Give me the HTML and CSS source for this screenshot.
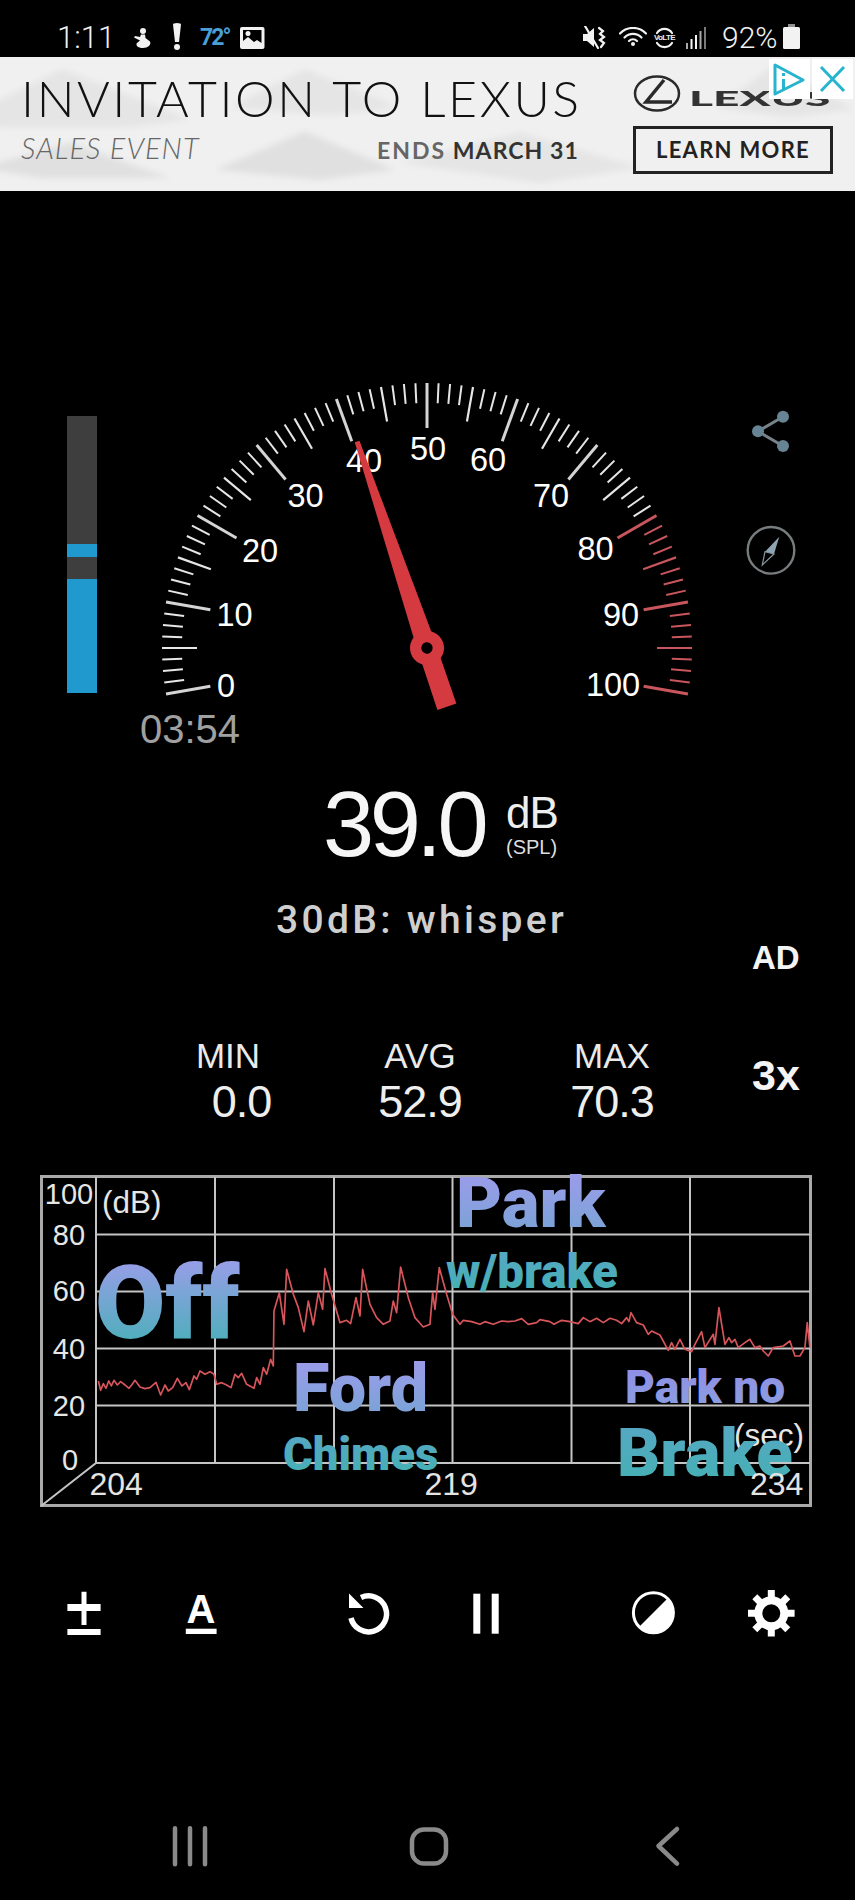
FILE: index.html
```html
<!DOCTYPE html>
<html lang="en">
<head>
<meta charset="utf-8">
<title>Sound Meter</title>
<link rel="stylesheet" href="styles.css">
</head>
<body>
<div class="phone">
  <header class="status">
    <div class="status-group">
      <span class="time">1:11</span>
      <svg class="si si-figure" viewBox="0 0 21 20"><circle cx="12" cy="3" r="3"/><path d="M10 6.500h4l.5 3.500 4.500 3.500c1.500 3-2 6.500-7 6.500-4 0-7-1.500-6.500-4.500l3.500-3-6-3 1-1.500 5 1z"/></svg>
      <svg class="si si-alert" viewBox="0 0 12 27"><path d="M2 1.500a4 1.500 0 0 1 8 0L8 19H4z"/><circle cx="6" cy="24" r="3"/></svg>
      <span class="temp">72°</span>
      <svg class="si si-image" viewBox="0 0 24.500 22"><path fill-rule="evenodd" d="M2 0h20.500a2 2 0 0 1 2 2v18a2 2 0 0 1-2 2H2a2 2 0 0 1-2-2V2a2 2 0 0 1 2-2zM3 3v11l5-4 6 5 3-2 4.500 3V3z"/><circle cx="8" cy="6.500" r="2.500"/></svg>
    </div>
    <div class="status-group">
      <svg class="si si-mute" viewBox="0 0 25 23"><path d="M0 8h4l7-6v19l-7-6H0z"/><path class="si-line" d="M16 2l4 3-3 3 4 3-4 3 4 3-3 4"/><path class="si-line" d="M2 0l13 22"/></svg>
      <svg class="si si-wifi" viewBox="0 0 28 19"><g class="si-line"><path d="M1 6.500a18 18 0 0 1 26 0"/><path d="M5.500 10.500a12 12 0 0 1 17 0"/><path d="M10 14a6 6 0 0 1 8 0"/></g><circle cx="14" cy="17" r="2"/></svg>
      <span class="volte">
        <svg class="si volte-arcs" viewBox="0 0 23 24"><path class="si-line" d="M4 7a9 9 0 0 1 15 0M19 17a9 9 0 0 1-15 0"/></svg>
        <span class="volte-text">VoLTE</span>
      </span>
      <svg class="si si-signal" viewBox="0 0 20 22"><rect x="0" y="16" width="2" height="6" opacity=".7"/><rect x="4.500" y="12" width="2" height="10"/><rect x="9" y="8" width="2" height="14"/><rect x="13.500" y="4" width="2" height="18" opacity=".7"/><rect x="18" y="0" width="2" height="22" opacity=".5"/></svg>
      <span class="battery-text">92%</span>
      <svg class="si si-battery" viewBox="0 0 17 25"><path d="M5 0h7v3H5z" opacity=".6"/><rect y="3" width="17" height="22" rx="1.500"/></svg>
    </div>
  </header>

  <section class="ad">
    <svg class="ad-bg" viewBox="0 0 855 133" preserveAspectRatio="none" aria-hidden="true">
      <defs><filter id="soft"><feGaussianBlur stdDeviation="3"/></filter></defs>
      <g filter="url(#soft)">
        <path class="ad-shade" d="M-40 62L62 12 190 62 130 70H0z"/>
        <path class="ad-shade" d="M230 50L305 12 400 50 330 58z"/>
        <path class="ad-shade" d="M715 50L775 8 855 52 790 60z"/>
        <path class="ad-shade-dark" d="M-20 110L70 85 170 120H40z"/>
        <path class="ad-shade-dark" d="M215 112L305 74 395 112 320 122z"/>
        <path class="ad-shade" d="M400 105L520 75 640 110 540 125z"/>
      </g>
    </svg>
    <div class="ad-left">
      <div class="ad-title">INVITATION TO LEXUS</div>
      <div class="ad-sub">
        <span class="ad-sales">SALES EVENT</span>
        <span class="ad-ends"><span class="ad-ends-soft">ENDS</span> MARCH 31</span>
      </div>
    </div>
    <div class="ad-right">
      <div class="ad-logo">
        <svg class="ad-emblem" viewBox="0 0 48 37"><ellipse cx="24" cy="18.500" rx="22" ry="17"/><path class="ad-emblem-l" d="M31 5L13 27h26"/></svg>
        <span class="ad-brand">LEXUS</span>
      </div>
      <div class="ad-cta">LEARN MORE</div>
    </div>
    <div class="ad-choices">
      <span class="ad-choice">
        <svg viewBox="0 0 41 40"><path d="M6 6l28 15L6 35z"/><path d="M14.500 14v3M14.500 20v11"/></svg>
      </span>
      <span class="ad-choice">
        <svg viewBox="0 0 41 40"><path d="M9 8l23 24M32 8L9 32"/></svg>
      </span>
    </div>
  </section>

  <section class="gauge-row">
    <div class="level">
      <div class="level-seg level-off level-a"></div>
      <div class="level-seg level-on level-b"></div>
      <div class="level-seg level-off level-c"></div>
      <div class="level-seg level-on level-d"></div>
    </div>
    <svg class="gauge" viewBox="130 370 590 380">
      <g id="ticks" class="ticks"></g>
      <g class="gauge-nums">
        <text x="226" y="696.500">0</text>
        <text x="234.500" y="626">10</text>
        <text x="260" y="562">20</text>
        <text x="305.500" y="506.500">30</text>
        <text x="364" y="471.500">40</text>
        <text x="428" y="459.500">50</text>
        <text x="488" y="471">60</text>
        <text x="551" y="506.500">70</text>
        <text x="595.500" y="560">80</text>
        <text x="621" y="626">90</text>
        <text x="613" y="696">100</text>
      </g>
      <text class="gauge-timer" x="140" y="742.500">03:54</text>
      <g class="needle" transform="translate(427 648) rotate(-18.700)">
        <path d="M-2.500 -218H2.500L9.500 -10 10 62H-10L-9.500 -10Z"/>
        <circle r="17"/>
        <circle class="needle-hole" r="5.700"/>
      </g>
    </svg>
    <div class="gauge-side">
      <svg class="share" viewBox="0 0 50 46"><path d="M37 8.700L12 23.300 37 38"/><circle cx="37" cy="8.700" r="6"/><circle cx="12" cy="23.300" r="6"/><circle cx="37" cy="38" r="6"/></svg>
      <svg class="compass" viewBox="0 0 50 50"><circle class="compass-ring" cx="25" cy="25.300" r="23.300"/><path class="compass-up" d="M33.300 11.700L19 26.700 28 29z"/><path class="compass-down" d="M19 26.700L16.300 40 28 29z"/></svg>
    </div>
  </section>

  <section class="reading">
    <span class="reading-value">39.0</span>
    <div class="reading-unit">
      <span class="unit-db">dB</span>
      <span class="unit-spl">(SPL)</span>
    </div>
  </section>
  <div class="reference">30dB: whisper</div>
  <div class="ad-tag">AD</div>

  <section class="stats">
    <div class="stat stat-min"><span class="stat-label">MIN</span><span class="stat-value">0.0</span></div>
    <div class="stat"><span class="stat-label">AVG</span><span class="stat-value">52.9</span></div>
    <div class="stat"><span class="stat-label">MAX</span><span class="stat-value">70.3</span></div>
    <span class="speed">3x</span>
  </section>

  <svg class="chart" viewBox="40 1170 772 340">
    <defs>
      <linearGradient id="gradOff" x1="0" y1="0" x2="0" y2="1"><stop offset=".1" stop-color="#9d9deb"/><stop offset=".9" stop-color="#46b0b6"/></linearGradient>
      <linearGradient id="gradFord" x1="0" y1="0" x2="0" y2="1"><stop offset=".15" stop-color="#9c9ceb"/><stop offset=".85" stop-color="#7aa3d6"/></linearGradient>
      <linearGradient id="gradTeal" x1="0" y1="0" x2="0" y2="1"><stop offset=".2" stop-color="#55a8c2"/><stop offset=".85" stop-color="#45b0b4"/></linearGradient>
      <linearGradient id="gradLav" x1="0" y1="0" x2="0" y2="1"><stop offset=".2" stop-color="#9090e6"/><stop offset=".9" stop-color="#8a9fe0"/></linearGradient>
    </defs>
    <g class="chart-grid">
      <rect class="chart-frame" x="41.500" y="1175.500" width="769" height="329"/>
      <path d="M96 1176V1462L41 1505M96 1462H810M96 1233.500H810M96 1290.500H810M96 1347.500H810M96 1404.500H810M215 1176V1462M334 1176V1462M452.500 1176V1462M571.500 1176V1462M690 1176V1462"/>
    </g>
    <polyline class="chart-line" transform="translate(30 1160) scale(.3333)" points="205,660 212,688 220,668 228,682 236,660 244,675 252,658 262,672 272,662 285,672 297,682 305,672 315,658 330,678 345,683 360,680 378,664 392,702 405,672 415,690 428,680 442,652 456,675 468,665 478,686 492,645 500,655 510,630 525,640 540,632 552,640 560,670 575,665 590,672 603,680 615,640 625,650 635,637 650,670 672,682 680,650 690,670 700,620 710,640 722,595 730,615 732,450 748,395 762,490 770,325 790,400 805,440 822,512 835,420 850,492 865,395 878,445 885,323 905,400 930,485 950,478 962,488 978,410 990,465 998,325 1020,430 1040,470 1060,490 1080,480 1090,420 1100,455 1112,318 1135,410 1155,470 1180,498 1200,490 1208,395 1215,445 1228,320 1250,400 1268,460 1290,490 1300,478 1325,482 1350,490 1365,482 1390,490 1415,480 1435,482 1455,480 1475,473 1495,490 1520,485 1530,476 1560,482 1572,490 1595,478 1620,482 1645,488 1660,470 1680,482 1700,472 1720,485 1740,472 1760,478 1775,488 1790,470 1797,482 1803,455 1820,485 1840,492 1855,520 1865,510 1890,522 1915,568 1925,545 1935,565 1950,535 1965,565 1985,572 1995,550 2015,512 2025,560 2050,520 2055,550 2067,440 2085,550 2097,530 2105,545 2115,535 2125,560 2145,545 2160,535 2175,560 2190,555 2200,570 2215,585 2230,560 2260,555 2280,540 2295,585 2310,585 2325,560 2332,485 2340,560"/>
    <g class="chart-y">
      <text x="69" y="1203">100</text>
      <text x="69" y="1244">80</text>
      <text x="69" y="1300">60</text>
      <text x="69" y="1358">40</text>
      <text x="69" y="1415">20</text>
      <text x="70" y="1469">0</text>
    </g>
    <text class="chart-unit" x="102" y="1212">(dB)</text>
    <g class="overlay">
      <text class="ov-off" x="95" y="1337" fill="url(#gradOff)">Off</text>
      <text class="ov-park" x="456" y="1226" fill="url(#gradFord)">Park</text>
      <text class="ov-wbrake" x="446" y="1287" fill="url(#gradTeal)">w/brake</text>
      <text class="ov-ford" x="293" y="1410" fill="url(#gradFord)">Ford</text>
      <text class="ov-chimes" x="283" y="1469" fill="url(#gradTeal)">Chimes</text>
      <text class="ov-parkno" x="625" y="1402" fill="url(#gradLav)">Park no</text>
    </g>
    <text class="chart-unit" x="734" y="1445">(sec)</text>
    <text class="ov-brake" x="617" y="1475" fill="url(#gradTeal)">Brake</text>
    <g class="chart-x">
      <text x="89.500" y="1494">204</text>
      <text x="424.500" y="1494">219</text>
      <text x="750" y="1494">234</text>
    </g>
  </svg>

  <nav class="toolbar">
    <svg class="tool" viewBox="0 0 48 48"><path d="M21.500 2.700h5V15h14.100v7H26.500v14h-5V22H7.400v-7h14.100zM7.400 40h33.200v6H7.400z"/></svg>
    <svg class="tool" viewBox="0 0 48 48"><text class="tool-letter" x="24" y="33.700">A</text><rect x="8.800" y="39.700" width="30.800" height="5.300"/></svg>
    <svg class="tool" viewBox="0 0 48 48"><path class="tool-stroke" d="M6 29A18 18 0 1 0 16 8.500"/><path d="M4 4.500V19H18.500z"/></svg>
    <svg class="tool" viewBox="0 0 48 48"><rect x="11.300" y="4.700" width="7" height="40"/><rect x="29.700" y="4.700" width="7" height="40"/></svg>
    <svg class="tool" viewBox="0 0 48 48"><circle class="tool-thin" cx="24.400" cy="23.700" r="20"/><path d="M10 38L38.500 9.500A20 20 0 0 1 10 38z"/></svg>
    <svg class="tool" viewBox="0 0 48 48"><circle class="tool-ring" cx="24.300" cy="24.300" r="13"/><path class="tool-teeth" d="M24.300 1v9M24.300 38.600v9M1 24.300h9M38.600 24.300h9M7.800 7.800l6.400 6.400M34.400 34.400l6.400 6.400M40.800 7.800l-6.400 6.400M14.200 34.400l-6.400 6.400"/></svg>
  </nav>

  <nav class="navbar">
    <svg class="nav-icon" viewBox="0 0 48 48"><path d="M9 6.300v36M24 6.300v36M39 6.300v36"/></svg>
    <svg class="nav-icon" viewBox="0 0 48 48"><rect x="7" y="7.500" width="34" height="34" rx="12"/></svg>
    <svg class="nav-icon" viewBox="0 0 48 48"><path d="M33 7L14.500 24 33 41.700"/></svg>
  </nav>
</div>
<script src="gauge.js"></script>
</body>
</html>
```

FILE: styles.css
```css
* { box-sizing: border-box; }
html, body { margin: 0; padding: 0; background: #000; }
body { font-family: "Liberation Sans", Arial, sans-serif; color: #fff; }
.phone { width: 855px; height: 1900px; overflow: hidden; background: #000; }

/* status bar */
.status { height: 57px; padding: 18px 55px 0 57px; display: flex; justify-content: space-between; align-items: center; }
.status-group { display: flex; align-items: center; }
.si { display: block; fill: #f2f2f2; flex: none; }
.si-line, .si-line path { fill: none; stroke: #f2f2f2; stroke-width: 2.200; stroke-linecap: round; }
.time { font: 300 31px/30px Roboto, sans-serif; color: #f2f2f2; width: 55px; white-space: nowrap; }
.si-figure { width: 21px; height: 20px; margin-left: 19px; }
.si-alert { width: 12px; height: 27px; margin-left: 19px; margin-top: -2px; }
.temp { font: 700 23px/24px "Liberation Sans Narrow", Roboto, sans-serif; color: #4aa0d6; width: 29px; margin-left: 17px; letter-spacing: -2px; white-space: nowrap; }
.si-image { width: 24.500px; height: 22px; margin-left: 11px; }
.si-mute { width: 25px; height: 23px; }
.si-wifi { width: 28px; height: 19px; margin-left: 11px; margin-top: -3px; }
.volte { position: relative; width: 23px; height: 24px; margin-left: 6px; display: block; }
.volte-arcs { width: 23px; height: 24px; }
.volte-text { position: absolute; left: 0; right: 0; top: 7px; text-align: center; font: 700 8px/10px "Liberation Sans", sans-serif; letter-spacing: -.6px; color: #eee; }
.si-signal { width: 20px; height: 22px; margin-left: 10px; }
.battery-text { font: 300 30px/30px Roboto, sans-serif; color: #f2f2f2; width: 55px; margin-left: 16px; white-space: nowrap; }
.si-battery { width: 17px; height: 25px; margin-left: 6px; margin-top: -2px; }

/* ad banner */
.ad { position: relative; height: 134px; display: flex; padding: 0 0 0 21px; background: #f0f0f0; color: #222; overflow: hidden; }
.ad-bg { position: absolute; inset: 0; width: 100%; height: 100%; }
.ad-shade { fill: #e5e5e5; }
.ad-shade-dark { fill: #e0e0e0; }
.ad-left { position: relative; width: 558px; padding-top: 16px; }
.ad-title { font: 300 50px/50px Lato, sans-serif; letter-spacing: 2.600px; color: #111; white-space: nowrap; }
.ad-sub { display: flex; justify-content: space-between; align-items: baseline; margin-top: 10px; }
.ad-sales { font: italic 300 29px/29px Lato, sans-serif; letter-spacing: 1px; color: #666; white-space: nowrap; }
.ad-ends { font: 700 23px/29px Lato, sans-serif; letter-spacing: 1.100px; color: #333; white-space: nowrap; }
.ad-ends-soft { color: #666; letter-spacing: 2px; }
.ad-right { position: relative; width: 200px; margin-left: 54px; padding-top: 18px; }
.ad-logo { display: flex; align-items: center; height: 37px; }
.ad-emblem { width: 48px; height: 37px; fill: none; stroke: #2a2a2a; stroke-width: 2.500; flex: none; }
.ad-emblem-l { stroke-width: 3.500; }
.ad-brand { font: 900 20px/20px Lato, sans-serif; color: #333; margin-left: 8px; margin-top: 8px; white-space: nowrap; transform: scaleX(2.300); transform-origin: left center; }
.ad-cta { margin-top: 14px; height: 48px; border: 3px solid #222; font: 700 22px/42px Lato, sans-serif; letter-spacing: 1.300px; text-align: center; color: #222; white-space: nowrap; }
.ad-choices { position: absolute; top: 2px; right: 2px; display: flex; gap: 2px; }
.ad-choice { display: block; width: 41px; height: 40px; background: #fff; }
.ad-choice svg { display: block; width: 41px; height: 40px; fill: none; stroke: #27b4cf; stroke-width: 3; stroke-linejoin: round; }

/* gauge */
.gauge-row { display: flex; margin-top: 179px; height: 380px; }
.level { width: 30px; height: 277px; margin: 46px 0 0 67px; display: flex; flex-direction: column; flex: none; }
.level-off { background: #3e3e3e; }
.level-on { background: #2099cf; }
.level-a { height: 128px; }
.level-b { height: 13px; }
.level-c { height: 22px; }
.level-d { height: 114px; }
.gauge { width: 590px; height: 380px; margin-left: 33px; flex: none; display: block; overflow: visible; }
.tick { stroke: #e6e6e6; stroke-width: 2; }
.tick-major { stroke: #d4d4d4; stroke-width: 3; }
.tick-mid { stroke-width: 2.200; }
.tick-red { stroke: #c9565d; }
.gauge-nums text { font-size: 32.500px; fill: #fff; text-anchor: middle; }
.gauge-timer { font-size: 40px; fill: #a0a0a0; }
.needle { fill: #d63a41; }
.needle-hole { fill: #000; }
.gauge-side { margin: 38px 0 0 26px; display: flex; flex-direction: column; gap: 71px; }
.share { display: block; width: 50px; height: 46px; }
.share path { fill: none; stroke: #77838b; stroke-width: 3; }
.share circle { fill: #668494; }
.compass { display: block; width: 50px; height: 50px; }
.compass-ring { fill: none; stroke: #777c7f; stroke-width: 2.400; }
.compass-up { fill: #8da4b2; }
.compass-down { fill: #000; stroke: #8a98a0; stroke-width: 1.200; }

/* reading */
.reading { display: flex; margin-top: 28px; height: 92px; padding-left: 323px; }
.reading-value { font-size: 92px; line-height: 92px; letter-spacing: -4.500px; width: 183px; white-space: nowrap; color: #f6f6f6; }
.reading-unit { display: flex; flex-direction: column; margin-top: 14px; }
.unit-db { font-size: 44px; line-height: 42px; letter-spacing: -1px; color: #eee; }
.unit-spl { font-size: 20px; line-height: 20px; margin-top: 3px; color: #ddd; }
.reference { margin-top: 32px; padding-left: 276px; font: 500 39px/37px Roboto, sans-serif; letter-spacing: 3.300px; color: #cfcfcf; white-space: nowrap; }
.ad-tag { margin-top: 2px; padding-left: 752px; font-size: 33px; line-height: 33px; font-weight: 700; color: #f4f4f4; }

/* stats */
.stats { display: flex; margin-top: 65px; padding-left: 132px; height: 86px; }
.stat { width: 192px; display: flex; flex-direction: column; align-items: center; }
.stat-label { font-size: 35px; line-height: 34px; color: #eaeaea; }
.stat-value { font-size: 45px; line-height: 42px; margin-top: 8px; letter-spacing: -1px; color: #eee; }
.stat-min .stat-value { margin-left: 27px; }
.speed { margin: 15px 0 0 44px; font-size: 43px; line-height: 43px; font-weight: 700; color: #f4f4f4; }

/* chart */
.chart { display: block; width: 772px; height: 340px; margin: 46px 0 0 40px; overflow: visible; }
.chart-grid { fill: none; stroke: #c4c4c4; stroke-width: 2; }
.chart-frame { stroke: #a9a9a9; stroke-width: 3; }
.chart-line { fill: none; stroke: #d8565b; stroke-width: 5; stroke-linejoin: round; }
.chart-y text { font-size: 29px; fill: #e6e6e6; text-anchor: middle; }
.chart-unit { font-size: 31.500px; fill: #e6e6e6; }
.chart-x text { font-size: 32px; fill: #e4e4e4; }
.overlay text, .ov-brake { font-family: Roboto, "Liberation Sans", sans-serif; font-weight: 900; }
.ov-off { font-size: 102px; }
.ov-park { font-size: 71px; }
.ov-wbrake { font-size: 47.500px; }
.ov-ford { font-size: 66.500px; }
.ov-chimes { font-size: 45.500px; }
.ov-parkno { font-size: 46px; }
.ov-brake { font-size: 67px; }

/* bottom bars */
.toolbar { display: grid; grid-template-columns: 117px 168px 117px 167px 118px 48px; margin-top: 78px; padding-left: 60px; height: 48px; }
.tool { display: block; width: 48px; height: 48px; fill: #fff; overflow: visible; }
.tool-letter { font-size: 40px; font-weight: 700; text-anchor: middle; }
.tool-stroke { fill: none; stroke: #fff; stroke-width: 5.500; }
.tool-thin { fill: none; stroke: #fff; stroke-width: 3; }
.tool-ring { fill: none; stroke: #fff; stroke-width: 8; }
.tool-teeth { fill: none; stroke: #fff; stroke-width: 7; }
.navbar { display: grid; grid-template-columns: 239px 239.500px 48px; margin-top: 185px; padding-left: 165.500px; height: 48px; }
.nav-icon { display: block; width: 48px; height: 48px; fill: none; stroke: #8a8a8a; stroke-width: 4.500; stroke-linecap: round; stroke-linejoin: round; }
```

FILE: gauge.js
```js
// Builds the 81 ticks of the dial: 0-100 dB across 200 degrees, eight steps per 10 dB.
(function () {
  var cx = 427, cy = 648, outer = 265;
  var group = document.getElementById('ticks');
  var ns = 'http://www.w3.org/2000/svg';
  for (var i = 0; i <= 80; i++) {
    var major = i % 8 === 0;
    var mid = !major && i % 4 === 0;
    var inner = major ? 220 : mid ? 230 : 245;
    var a = (-100 + i * 2.5) * Math.PI / 180;
    var line = document.createElementNS(ns, 'line');
    line.setAttribute('x1', (cx + outer * Math.sin(a)).toFixed(2));
    line.setAttribute('y1', (cy - outer * Math.cos(a)).toFixed(2));
    line.setAttribute('x2', (cx + inner * Math.sin(a)).toFixed(2));
    line.setAttribute('y2', (cy - inner * Math.cos(a)).toFixed(2));
    line.setAttribute('class', 'tick' + (major ? ' tick-major' : mid ? ' tick-mid' : '') + (i >= 64 ? ' tick-red' : ''));
    group.appendChild(line);
  }
})();
```
